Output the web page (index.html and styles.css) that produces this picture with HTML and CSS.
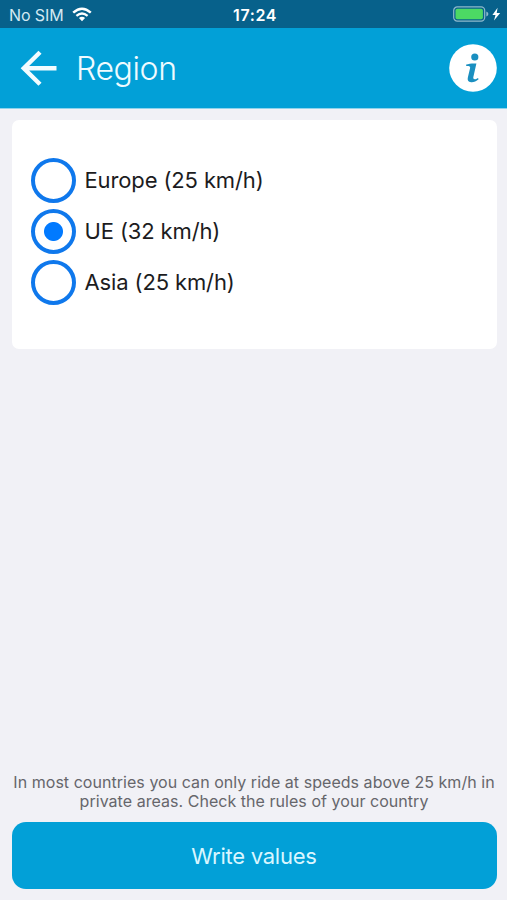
FILE: index.html
```html
<!DOCTYPE html>
<html lang="en">
<head>
    <meta charset="UTF-8">
    <meta name="viewport" content="width=device-width, initial-scale=1.0">
    <title>Region</title>
    <link rel="stylesheet" href="styles.css">
</head>
<body>
    <!-- Status bar -->
    <div class="status-bar">
        <div class="carrier">
            <span class="carrier-name">No SIM</span>
            <svg class="wifi" width="20" height="15" viewBox="0 0 20 15">
                <path d="M1.2 5.6 Q10 -2.2 18.8 5.6" fill="none" stroke="#fff" stroke-width="2.5"/>
                <path d="M4.4 8.9 Q10 4.2 15.6 8.9" fill="none" stroke="#fff" stroke-width="2.3"/>
                <path d="M6.9 11.1 Q10 8.6 13.1 11.1 L10 14.2 Z" fill="#fff"/>
            </svg>
        </div>
        <span class="time">17:24</span>
        <svg class="battery" width="48" height="16" viewBox="0 0 48 16">
            <rect x="0.7" y="0.9" width="31" height="14.2" rx="3.6" fill="none" stroke="#8fb9cc" stroke-width="1.2"/>
            <rect x="2.5" y="2.7" width="27.4" height="10.6" rx="1.8" fill="#4cd964"/>
            <path d="M33.3 5.6 Q35.4 6.2 35.4 8 Q35.4 9.8 33.3 10.4 Z" fill="#8fb9cc"/>
            <path d="M44.6 1.8 L39.4 9 H42.5 L41 14.6 L47.2 7 H43.7 Z" fill="#fff"/>
        </svg>
    </div>

    <header class="header">
        <svg class="back" width="38" height="38" viewBox="0 0 38 38">
            <path d="M36.5 19.3 H4 M20 3.3 L3.8 19.3 L20 35.3" fill="none" stroke="#f2fcff" stroke-width="4.4"/>
        </svg>
        <h1>Region</h1>
        <svg class="info" width="48" height="48" viewBox="0 0 48 48">
            <circle cx="24" cy="24" r="23.8" fill="#fff"/>
            <circle cx="25.8" cy="13" r="3.6" fill="#1a8fc0"/>
            <path d="M17.2 20.6 C20 19.6 23.6 19.2 27.4 19.5 L24.3 33.3 C23.9 35.6 26.4 35.7 29 33.9 L29.6 35.2 C27.2 37.5 24.5 38.4 22.2 38.2 C19.1 37.9 18.3 35.9 18.9 33.2 L21.1 24.1 C21.5 22.3 20.2 22 17.2 22.1 Z" fill="#1a8fc0"/>
        </svg>
    </header>

    <!-- Region options -->
    <div class="card">
        <label class="option">
            <input type="radio" name="region" value="europe">
            <span>Europe (25 km/h)</span>
        </label>
        <label class="option">
            <input type="radio" name="region" value="ue" checked>
            <span>UE (32 km/h)</span>
        </label>
        <label class="option">
            <input type="radio" name="region" value="asia">
            <span>Asia (25 km/h)</span>
        </label>
    </div>

    <footer class="footer">
        <p>In most countries you can only ride at speeds above 25 km/h in<br>private areas. Check the rules of your country</p>
        <button type="button" class="btn">Write values</button>
    </footer>
</body>
</html>
```

FILE: styles.css
```css
/* General Styles */
* {
    box-sizing: border-box;
}

body {
    margin: 0;
    height: 900px;
    display: flex;
    flex-direction: column;
    overflow: hidden;
    font-family: Inter, "Liberation Sans", sans-serif;
    background-color: #f1f1f6;
}

.status-bar {
    height: 28px;
    padding: 0 6px 0 9px;
    display: grid;
    grid-template-columns: 1fr auto 1fr;
    align-items: center;
    background-color: #07618b;
    color: #fff;
}

.carrier {
    display: flex;
    align-items: center;
    gap: 8px;
}

.carrier-name {
    font-size: 16px;
    line-height: 20px;
    padding-top: 2px;
    letter-spacing: -0.1px;
    color: #d3e9f2;
}

.time {
    font-size: 16px;
    line-height: 20px;
    padding-top: 1px;
    font-weight: 600;
    letter-spacing: 0.6px;
}

.battery {
    justify-self: end;
}

.header {
    height: 81px;
    padding: 0 10px 0 20px;
    display: flex;
    align-items: center;
    background-color: #02a0d7;
    border-bottom: 1px solid #8fd3ec;
}

h1 {
    flex: 1;
    margin: 0 0 0 18px;
    padding-top: 2px;
    font-size: 32px;
    line-height: 40px;
    font-weight: 300;
    letter-spacing: -0.4px;
    color: #effbff;
}

.card {
    height: 229px;
    margin: 10.5px 10.5px 0 11.5px;
    padding: 38px 19px;
    display: flex;
    flex-direction: column;
    gap: 6.2px;
    background-color: #fff;
    border-radius: 7px;
}

.option {
    display: flex;
    align-items: center;
    gap: 9px;
    height: 45px;
    font-size: 22px;
    letter-spacing: -0.13px;
    color: #1c1c1e;
}

.option span {
    padding-bottom: 1px;
}

input[type="radio"] {
    appearance: none;
    width: 45px;
    height: 45px;
    margin: 0;
    border: 4px solid #0f78ec;
    border-radius: 50%;
}

input[type="radio"]:checked {
    background: radial-gradient(circle, #017aff 9px, transparent 10px);
}

.footer {
    margin-top: auto;
    padding: 0 10.5px 11px 11.5px;
}

p {
    margin: 0 0 11px;
    font-size: 16px;
    line-height: 19px;
    letter-spacing: 0.04px;
    text-align: center;
    white-space: nowrap;
    color: #66666b;
}

.btn {
    display: block;
    width: 100%;
    height: 67px;
    border: none;
    border-radius: 14px;
    background-color: #02a0d7;
    font-family: inherit;
    font-size: 22px;
    letter-spacing: -0.25px;
    color: #d9f6ff;
    cursor: pointer;
}
```
